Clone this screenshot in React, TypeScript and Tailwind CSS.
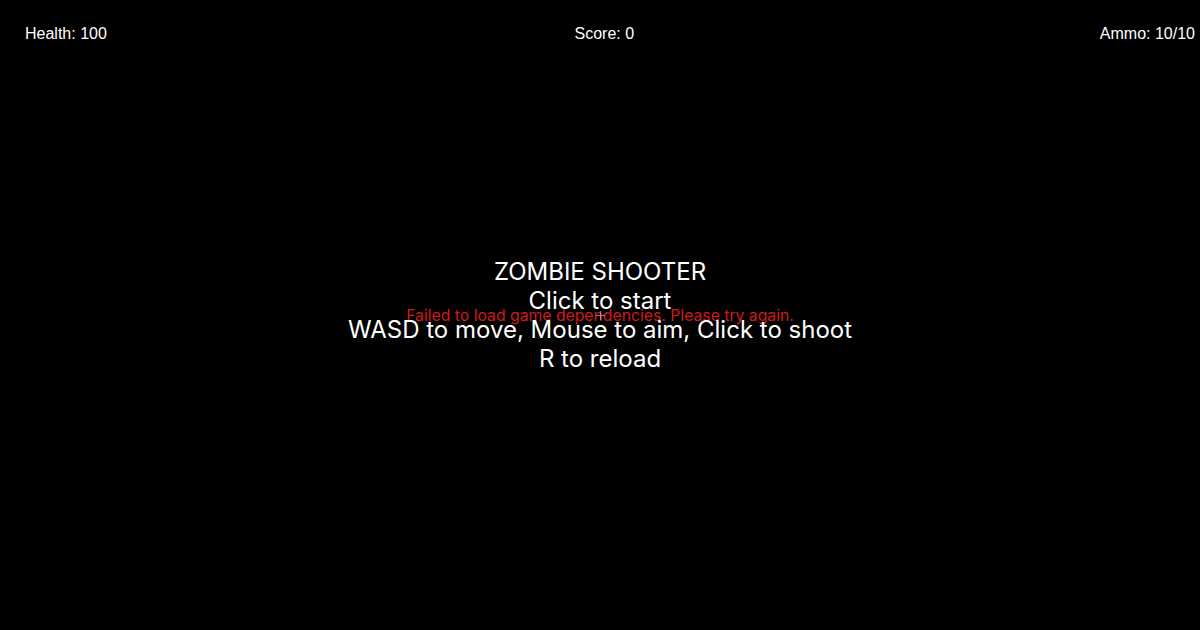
export default function App() {
  return (
    <div className="relative w-[1200px] h-[630px] bg-black overflow-hidden">
      <div className="flex justify-between pl-[25px] pr-[5px] pt-[25px] text-white text-[16px] leading-[18px] font-['Liberation_Sans',Arial,sans-serif]">
        <span>Health: 100</span>
        <span className="ml-[2px]">Score: 0</span>
        <span>Ammo: 10/10</span>
      </div>

      <div className="absolute inset-0 flex items-center justify-center pt-[2px]">
        <p className="text-[#d11a1a] text-[15.75px] leading-[20px] font-['Inter',sans-serif]">
          Failed to load game dependencies. Please try again.
        </p>
      </div>

      <div className="absolute inset-0 flex items-center justify-center">
        <div className="relative w-[9px] h-[9px] opacity-60">
          <div className="absolute left-[4px] top-0 w-px h-[9px] bg-gray-300" />
          <div className="absolute top-[4px] left-0 h-px w-[9px] bg-gray-300" />
        </div>
      </div>

      <div className="absolute inset-0 flex flex-col items-center justify-center text-white text-[24px] leading-[29px] font-['Inter',sans-serif] text-center">
        <div>ZOMBIE SHOOTER</div>
        <div>Click to start</div>
        <div>WASD to move, Mouse to aim, Click to shoot</div>
        <div>R to reload</div>
      </div>
    </div>
  );
}
